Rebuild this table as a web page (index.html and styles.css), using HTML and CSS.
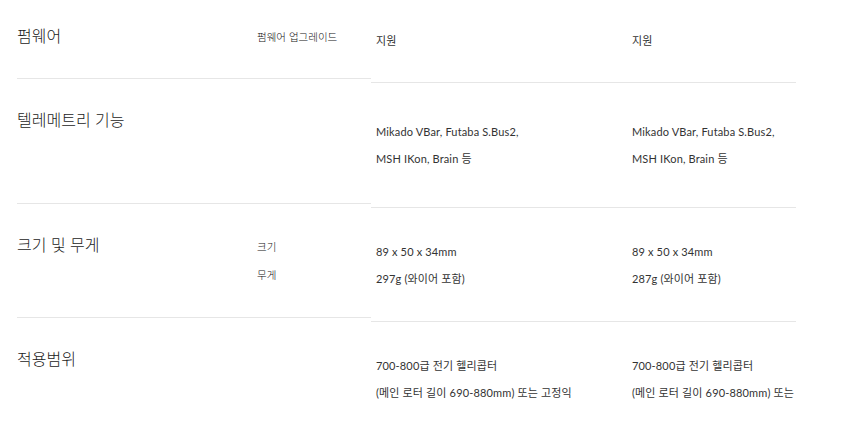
FILE: index.html
```html
<!DOCTYPE html>
<html lang="ko">
<head>
    <meta charset="UTF-8">
    <meta name="viewport" content="width=device-width, initial-scale=1.0">
    <title>사양 비교</title>
    <link rel="stylesheet" href="styles.css">
</head>
<body>
    <div class="spec">
        <!-- Fixed label column -->
        <div class="spec-labels">
            <div class="label-row">
                <div class="label-title">펌웨어</div>
                <div class="label-sub">
                    <p>펌웨어 업그레이드</p>
                </div>
            </div>
            <div class="label-row">
                <div class="label-title">텔레메트리 기능</div>
                <div class="label-sub"></div>
            </div>
            <div class="label-row">
                <div class="label-title">크기 및 무게</div>
                <div class="label-sub">
                    <p>크기</p>
                    <p>무게</p>
                </div>
            </div>
            <div class="label-row">
                <div class="label-title">적용범위</div>
                <div class="label-sub"></div>
            </div>
        </div>

        <!-- Scrolling value columns -->
        <div class="spec-values">
            <div class="value-grid">
                <div class="value-cell first"><p>지원</p></div>
                <div class="value-cell first"><p>지원</p></div>

                <div class="value-cell">
                    <p>Mikado VBar, Futaba S.Bus2,</p>
                    <p>MSH IKon, Brain 등</p>
                </div>
                <div class="value-cell">
                    <p>Mikado VBar, Futaba S.Bus2,</p>
                    <p>MSH IKon, Brain 등</p>
                </div>

                <div class="value-cell">
                    <p>89 x 50 x 34mm</p>
                    <p>297g (와이어 포함)</p>
                </div>
                <div class="value-cell">
                    <p>89 x 50 x 34mm</p>
                    <p>287g (와이어 포함)</p>
                </div>

                <div class="value-cell last">
                    <p>700-800급 전기 헬리콥터</p>
                    <p>(메인 로터 길이 690-880mm) 또는 고정익</p>
                </div>
                <div class="value-cell last">
                    <p>700-800급 전기 헬리콥터</p>
                    <p>(메인 로터 길이 690-880mm) 또는 고정익</p>
                </div>
            </div>
        </div>
    </div>
</body>
</html>
```

FILE: styles.css
```css
body {
    margin: 0;
    padding: 0;
    background-color: #fff;
    color: #333;
    font-family: Lato, "Noto Sans CJK KR", sans-serif;
    overflow: hidden;
}

p {
    margin: 0;
}

.spec {
    display: flex;
    align-items: flex-start;
    margin-top: -5px;
    padding-left: 17px;
}

.spec-labels {
    width: 354px;
    display: grid;
    grid-template-rows: 84px 125px 114px 114px;
}

.label-row {
    display: flex;
    border-bottom: 1px solid #e6e6e6;
}

.label-row:last-child {
    border-bottom: none;
}

.label-title {
    width: 240px;
    padding-top: 29px;
    font-family: "Noto Sans CJK KR", sans-serif;
    font-size: 16px;
    font-weight: 300;
    line-height: 22px;
    color: #1a1a1a;
}

.label-sub {
    display: flex;
    flex-direction: column;
    justify-content: center;
    font-family: "Noto Sans CJK KR", sans-serif;
    font-size: 10.5px;
    font-weight: 300;
    line-height: 28px;
    color: #111;
}

.spec-values {
    width: 425px;
    overflow: hidden;
}

.value-grid {
    display: grid;
    grid-template-columns: 256px 256px;
    grid-template-rows: 88px 125px 114px 114px;
    width: 512px;
}

.value-cell {
    display: flex;
    flex-direction: column;
    justify-content: center;
    padding-left: 5px;
    border-bottom: 1px solid #e6e6e6;
    font-size: 11px;
    letter-spacing: 0.15px;
    line-height: 27px;
    color: #333;
    white-space: nowrap;
    overflow: hidden;
}

.value-cell.first {
    padding-top: 4px;
}

.value-cell.last {
    border-bottom: none;
}
```
